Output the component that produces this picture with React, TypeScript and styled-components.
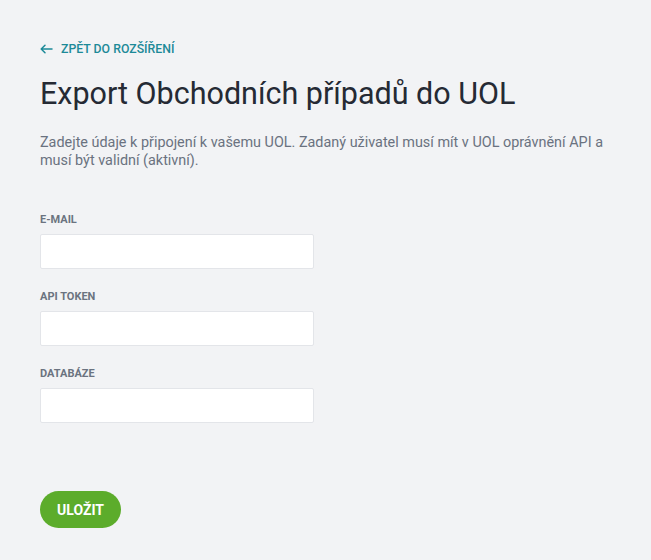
import styled, { createGlobalStyle } from 'styled-components';

const GlobalStyle = createGlobalStyle`
  html, body {
    margin: 0;
    padding: 0;
    background: #f2f3f5;
    font-family: Roboto, 'Noto Sans', sans-serif;
  }
`;

interface IField {
  label: string;
  name: string;
  type: string;
}

const fields: IField[] = [
  { label: 'E-mail', name: 'email', type: 'email' },
  { label: 'API token', name: 'token', type: 'text' },
  { label: 'Databáze', name: 'database', type: 'text' },
];

const App = () => {
  return (
    <>
      <GlobalStyle />
      <Page>
        <BackLink href='#'>
          <svg width='13' height='10' viewBox='0 0 13 10' fill='none'>
            <path
              d='M12 5H1.5M5 1.2L1.2 5L5 8.8'
              stroke='currentColor'
              strokeWidth='1.5'
              strokeLinecap='round'
              strokeLinejoin='round'
            />
          </svg>
          Zpět do rozšíření
        </BackLink>
        <Title>Export Obchodních případů do UOL</Title>
        <Description>
          Zadejte údaje k připojení k vašemu UOL. Zadaný uživatel musí mít v UOL oprávnění API a
          musí být validní (aktivní).
        </Description>
        <Form>
          {fields.map(({ label, name, type }) => (
            <Field key={name}>
              <Label htmlFor={name}>{label}</Label>
              <Input id={name} name={name} type={type} />
            </Field>
          ))}
        </Form>
        <SaveButton type='button'>Uložit</SaveButton>
      </Page>
    </>
  );
};

export default App;

const Page = styled.div`
  display: flex;
  flex-direction: column;
  align-items: flex-start;
  padding: 41px 40px 32px;
  min-height: 560px;
  box-sizing: border-box;
`;
const BackLink = styled.a`
  display: inline-flex;
  align-items: center;
  gap: 8px;
  height: 16px;
  line-height: 16px;
  color: #1d8a98;
  font-size: 12.3px;
  font-weight: 500;
  text-transform: uppercase;
  text-decoration: none;
`;
const Title = styled.h1`
  margin: 19px 0 0;
  font-size: 30.5px;
  font-weight: 400;
  line-height: 36px;
  color: #252a34;
`;
const Description = styled.p`
  margin: 22px 0 0;
  width: 575px;
  font-size: 14.4px;
  line-height: 18px;
  color: #6a7280;
`;
const Form = styled.div`
  display: flex;
  flex-direction: column;
  gap: 21px;
  margin-top: 43px;
`;
const Field = styled.div`
  display: flex;
  flex-direction: column;
  gap: 7px;
`;
const Label = styled.label`
  font-size: 11px;
  line-height: 14px;
  font-weight: 700;
  text-transform: uppercase;
  color: #6b7380;
`;
const Input = styled.input`
  width: 274px;
  height: 35px;
  box-sizing: border-box;
  border: 1px solid #e3e5e9;
  border-radius: 2px;
  background: #fff;
  padding: 0 10px;
  font-family: inherit;
  font-size: 14px;
  outline: none;
`;
const SaveButton = styled.button`
  margin-top: 68px;
  width: 81px;
  height: 37px;
  padding: 0;
  border: none;
  border-radius: 19px;
  background: #5cac2b;
  color: #fff;
  font-family: inherit;
  font-size: 14px;
  font-weight: 700;
  text-transform: uppercase;
  cursor: pointer;
`;
